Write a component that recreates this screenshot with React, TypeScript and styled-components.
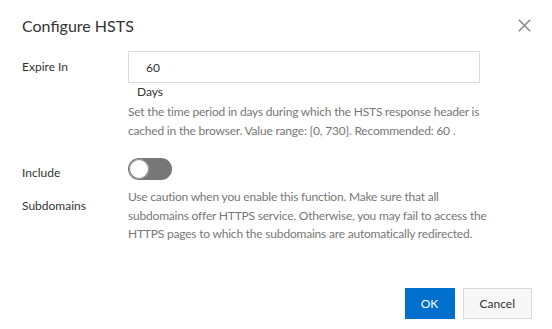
import React from "react";
import styled, { createGlobalStyle } from "styled-components";

const Global = createGlobalStyle`
  html, body { margin: 0; padding: 0; background: #fff; }
  body { font-family: Lato, "Noto Sans", sans-serif; color: #333; }
  * { box-sizing: border-box; }
`;

const Dialog = styled.div`
  width: 552px;
  height: 329px;
  background: #fff;
  display: flex;
  flex-direction: column;
`;

const Header = styled.div`
  display: flex;
  align-items: center;
  justify-content: space-between;
  padding: 12px 21px 0 22px;
  height: 39px;
`;

const Title = styled.div`
  font-size: 16px;
  line-height: 22px;
  color: #333;
`;

const CloseBtn = styled.button`
  border: 0;
  background: transparent;
  padding: 0;
  width: 14px;
  height: 14px;
  display: flex;
  align-items: center;
  justify-content: center;
  cursor: pointer;
`;

const Body = styled.div`
  flex: 1;
  padding: 12px 22px 0 22px;
  display: flex;
  flex-direction: column;
`;

const Row = styled.div<{ $gap?: number }>`
  display: grid;
  grid-template-columns: 106px 352px;
  margin-bottom: ${(p) => p.$gap ?? 0}px;
`;

const Label = styled.div<{ $mt: number; $lh: number }>`
  font-size: 12px;
  line-height: ${(p) => p.$lh}px;
  margin-top: ${(p) => p.$mt}px;
  color: #333;
`;

const Control = styled.div`
  display: flex;
  flex-direction: column;
`;

const Input = styled.input`
  width: 352px;
  height: 32px;
  border: 1px solid #dcdcdc;
  padding: 0 17px;
  font-family: inherit;
  font-size: 12px;
  color: #333;
  outline: none;
`;

const Unit = styled.div`
  font-size: 12px;
  line-height: 18px;
  padding: 0 0 0 9px;
  color: #333;
`;

const Help = styled.div`
  font-size: 12px;
  line-height: 18.5px;
  letter-spacing: -0.2px;
  white-space: nowrap;
  color: #777;
  margin-top: 2px;
`;

const Switch = styled.div<{ $on: boolean }>`
  width: 44px;
  height: 22px;
  border-radius: 11px;
  background: ${(p) => (p.$on ? "#0070cc" : "#777")};
  position: relative;
  margin: 0 0 6px;
`;

const Knob = styled.div`
  position: absolute;
  top: 1px;
  left: 1px;
  width: 20px;
  height: 20px;
  border-radius: 50%;
  background: #fff;
  box-shadow: 0 0 0 1px #8a8a8a inset;
`;

const Footer = styled.div`
  display: flex;
  justify-content: flex-end;
  gap: 8px;
  padding: 0 20px 10px 0;
`;

const Button = styled.button<{ $primary?: boolean }>`
  height: 31px;
  min-width: 50px;
  padding: 0 ${(p) => (p.$primary ? 15 : 16)}px;
  font-family: inherit;
  font-size: 12px;
  border: 1px solid ${(p) => (p.$primary ? "#0070cc" : "#d9d9d9")};
  background: ${(p) => (p.$primary ? "#0070cc" : "#f7f7f7")};
  color: ${(p) => (p.$primary ? "#fff" : "#333")};
  cursor: pointer;
`;

export default function App() {
  return (
    <>
      <Global />
      <Dialog>
        <Header>
          <Title>Configure HSTS</Title>
          <CloseBtn aria-label="close">
            <svg width="13" height="13" viewBox="0 0 13 13">
              <path d="M0.8 0.8 L12.2 12.2 M12.2 0.8 L0.8 12.2" stroke="#888" strokeWidth="1.5" fill="none" />
            </svg>
          </CloseBtn>
        </Header>
        <Body>
          <Row $gap={18}>
            <Label $mt={0} $lh={32}>Expire In</Label>
            <Control>
              <Input defaultValue="60" />
              <Unit>Days</Unit>
              <Help>
                Set the time period in days during which the HSTS response header is
                <br />
                cached in the browser. Value range: [0, 730]. Recommended: 60 .
              </Help>
            </Control>
          </Row>
          <Row>
            <Label $mt={-2} $lh={33}>
              Include
              <br />
              Subdomains
            </Label>
            <Control>
              <Switch $on={false}>
                <Knob />
              </Switch>
              <Help>
                Use caution when you enable this function. Make sure that all
                <br />
                subdomains offer HTTPS service. Otherwise, you may fail to access the
                <br />
                HTTPS pages to which the subdomains are automatically redirected.
              </Help>
            </Control>
          </Row>
        </Body>
        <Footer>
          <Button $primary>OK</Button>
          <Button>Cancel</Button>
        </Footer>
      </Dialog>
    </>
  );
}
